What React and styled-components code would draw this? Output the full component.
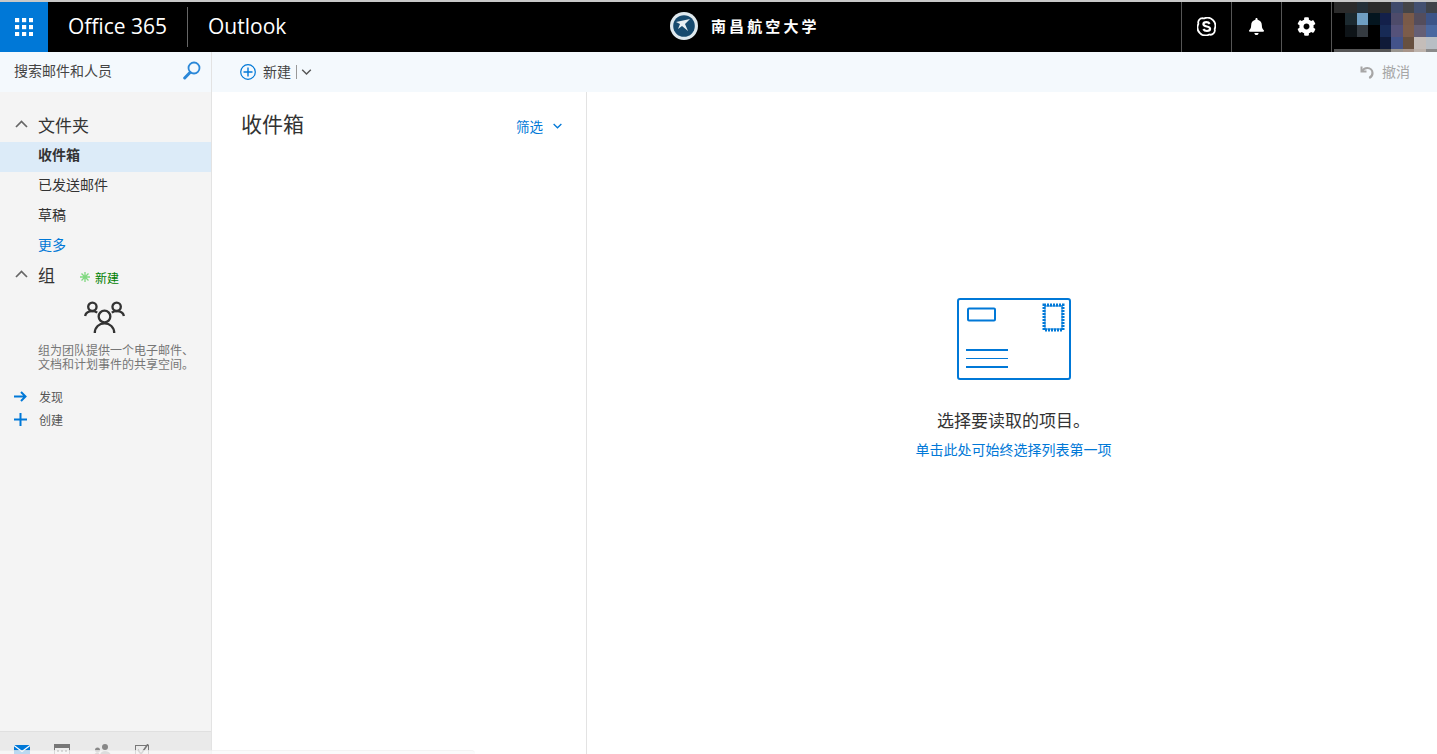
import React from "react";
import styled, { createGlobalStyle } from "styled-components";
import { FaBell, FaCog } from "react-icons/fa";

const GlobalStyle = createGlobalStyle`
  html, body, #root {
    margin: 0;
    height: 100%;
    overflow: hidden;
    background: #fff;
  }
  body {
    font-family: "Open Sans", "Noto Sans CJK SC", sans-serif;
    color: #333;
  }
`;

const CJK = `"Noto Sans CJK SC", "Noto Sans", sans-serif`;

const Page = styled.div`
  height: 754px;
  display: flex;
  flex-direction: column;
  position: relative;
  overflow: hidden;
  border-top: 2px solid #c8c8c8;
  box-sizing: border-box;
`;

const Header = styled.header`
  flex: 0 0 50px;
  display: flex;
  align-items: stretch;
  background: #000;
  color: #fff;
`;

const HeaderLeft = styled.div`
  flex: 0 0 670px;
  display: flex;
  align-items: center;
`;

const Waffle = styled.button`
  width: 48px;
  height: 50px;
  border: 0;
  padding: 0;
  background: #0078d7;
  display: grid;
  place-items: center;
`;

const Brand = styled.span`
  font-size: 21px;
  line-height: 48px;
  height: 50px;
  margin-left: 20px;
  width: 119px;
  white-space: nowrap;
`;

const BrandDivider = styled.span`
  width: 1px;
  height: 40px;
  background: #666;
`;

const AppName = styled(Brand)`
  width: auto;
`;

const School = styled.div`
  display: flex;
  align-items: center;
  gap: 13px;
  padding-bottom: 3px;
`;

const SchoolName = styled.span`
  font-family: ${CJK};
  font-size: 15px;
  font-weight: 700;
  letter-spacing: 3.1px;
  white-space: nowrap;
`;

const HeaderRight = styled.div`
  margin-left: auto;
  display: flex;
`;

const HeaderButton = styled.button`
  width: 50px;
  height: 50px;
  padding: 0 0 2px;
  border: 0;
  border-left: 1px solid #555;
  background: #000;
  color: #fff;
  display: grid;
  place-items: center;
  font-size: 17px;
`;

const Avatar = styled.div`
  width: 106px;
  height: 50px;
  border-left: 1px solid #555;
  padding-left: 2px;
  box-sizing: border-box;
  display: grid;
  grid-template-columns: repeat(9, 1fr);
  grid-template-rows: 11px 12px 12px 12px 3px;
  background: #000;
`;

const Body = styled.div`
  flex: 1;
  display: flex;
  min-height: 0;
`;

const Sidebar = styled.aside`
  flex: 0 0 212px;
  box-sizing: border-box;
  border-right: 1px solid #e3e3e3;
  display: flex;
  flex-direction: column;
  background: #f4f4f4;
`;

const SearchBox = styled.div`
  flex: 0 0 40px;
  box-sizing: border-box;
  display: flex;
  align-items: center;
  justify-content: space-between;
  padding: 0 10px 3px 14px;
  background: #f4f9fd;
  font-family: ${CJK};
  font-size: 14px;
  line-height: 20px;
  color: #444;
`;

const SearchLabel = styled.span`
  margin-top: -2px;
`;

const Nav = styled.nav`
  flex: 1;
  padding-top: 20px;
`;

const SectionHead = styled.div`
  height: 30px;
  box-sizing: border-box;
  padding: 0 0 6px 15px;
  display: flex;
  align-items: center;
  gap: 10px;
  font-family: ${CJK};
  font-size: 17px;
  color: #333;
`;

const Chevron = styled.svg`
  flex: none;
`;

const FolderRow = styled.div`
  height: 30px;
  line-height: 24px;
  padding-left: 38px;
  font-family: ${CJK};
  font-size: 14px;
  font-weight: ${(p) => (p.$active ? 700 : 400)};
  color: ${(p) => (p.$link ? "#0078d7" : "#333")};
  background: ${(p) => (p.$active ? "#dcebf8" : "transparent")};
`;

const GroupNew = styled.span`
  display: flex;
  align-items: center;
  gap: 4px;
  margin-left: 14px;
  font-size: 12px;
  color: #008000;
  position: relative;
  top: 3px;
`;

const GroupIcon = styled.div`
  display: flex;
  justify-content: center;
  margin: 9px 0 0 -3px;
`;

const GroupText = styled.p`
  margin: 9px 0 0;
  padding-left: 38px;
  font-family: ${CJK};
  font-size: 12px;
  line-height: 14px;
  color: #767676;
  white-space: nowrap;
`;

const GroupActions = styled.div`
  margin-top: 14px;
  display: flex;
  flex-direction: column;
  gap: 1px;
`;

const GroupAction = styled.div`
  height: 22.5px;
  display: flex;
  align-items: center;
  gap: 12px;
  padding-left: 14px;
  font-family: ${CJK};
  font-size: 12px;
  color: #555;
`;

const Tabs = styled.div`
  flex: 0 0 23px;
  box-sizing: border-box;
  border-top: 1px solid #e0e0e0;
  background: #eaeaea;
  display: flex;
  gap: 24px;
  padding: 12px 0 0 14px;
  overflow: hidden;
`;

const Main = styled.main`
  flex: 1;
  display: flex;
  flex-direction: column;
  min-width: 0;
`;

const CommandBar = styled.div`
  flex: 0 0 40px;
  box-sizing: border-box;
  background: #f4f9fd;
  display: flex;
  align-items: center;
  justify-content: space-between;
  padding: 0 27px 1px 28px;
  font-family: ${CJK};
  font-size: 14px;
  line-height: 20px;
  color: #444;
`;

const CommandGroup = styled.div`
  display: flex;
  align-items: center;
  gap: ${(p) => p.$gap || 7}px;
  color: ${(p) => (p.$muted ? "#a6a6a6" : "inherit")};
`;

const CommandLabel = styled.span`
  margin-top: -2px;
`;

const Sep = styled.span`
  width: 1px;
  height: 14px;
  background: #999;
  margin: 0 -3px 0 -2px;
`;

const Panes = styled.div`
  flex: 1;
  display: flex;
  min-height: 0;
`;

const ListPane = styled.section`
  flex: 0 0 375px;
  box-sizing: border-box;
  border-right: 1px solid #e3e3e3;
  padding: 15px 24px 0 29px;
  display: flex;
  justify-content: space-between;
  align-items: flex-start;
`;

const ListTitle = styled.h1`
  margin: 0;
  font-family: ${CJK};
  font-size: 21px;
  font-weight: 400;
  line-height: 32px;
  color: #333;
`;

const Filter = styled.div`
  display: flex;
  align-items: center;
  gap: 10px;
  margin-top: 10px;
  font-family: ${CJK};
  font-size: 13.5px;
  line-height: 18px;
  color: #0078d7;
`;

const ReadingPane = styled.section`
  flex: 1;
  display: flex;
  flex-direction: column;
  align-items: center;
  padding: 206px 0 0 3px;
`;

const EmptyTitle = styled.div`
  margin-top: 27px;
  font-family: ${CJK};
  font-size: 17px;
  line-height: 24px;
  color: #333;
`;

const EmptyLink = styled.a`
  margin-top: 7px;
  font-family: ${CJK};
  font-size: 14px;
  line-height: 20px;
  color: #0078d7;
`;

const BottomEdge = styled.div`
  position: absolute;
  left: 0;
  bottom: 0;
  width: 475px;
  height: 3px;
  background: rgba(250, 250, 250, 0.75);
  border-top: 1px solid rgba(0, 0, 0, 0.03);
  border-top-right-radius: 4px;
`;

const avatarCells = [
  "#2b2b2b", "#2b2b2b", "#243039", "#2a2a2a", "#2c2c2c", "#3f4a6b", "#444548", "#435070", "#3f4349",
  "#000", "#1c2a30", "#6f9fc3", "#04151f", "#13204a", "#4e4b6a", "#7a5a48", "#544d5c", "#3d5487",
  "#000", "#0e1418", "#353b41", "#000", "#172a55", "#55527a", "#7c5c4a", "#655f75", "#4a68a0",
  "#000", "#000", "#000", "#000", "#0f1a38", "#43538a", "#67503f", "#c4bdb9", "#b8bec4",
  "#555", "#555", "#555", "#555", "#555", "#99958f", "#a8958a", "#bdb3ac", "#8a8a8a",
];

const Up = () => (
  <Chevron width="13" height="8" viewBox="0 0 13 8" fill="none" stroke="#666" strokeWidth="1.7">
    <path d="M1 7l5.5-5.5L12 7" />
  </Chevron>
);

const Down = ({ color = "#555", w = 10 }) => (
  <Chevron width={w} height="6" viewBox="0 0 10 6" fill="none" stroke={color} strokeWidth="1.4">
    <path d="M.7.7L5 5l4.3-4.3" />
  </Chevron>
);

const WaffleIcon = () => (
  <svg width="18" height="18" viewBox="0 0 18 18" fill="#fff">
    {[0, 7, 14].map((y) =>
      [0, 7, 14].map((x) => <rect key={`${x}-${y}`} x={x} y={y} width="4.2" height="4.2" />)
    )}
  </svg>
);

const SchoolLogo = () => (
  <svg width="28" height="28" viewBox="0 0 28 28">
    <circle cx="14" cy="14" r="14" fill="#dfe9ee" />
    <circle cx="14" cy="14" r="10.8" fill="#174a6e" />
    <path d="M6 10l14-3-5 5 3 7-6-5-4 3 2-5z" fill="#e8eef2" />
  </svg>
);

const SkypeIcon = () => (
  <svg width="19" height="19" viewBox="0 0 19 19" fill="none" stroke="#fff">
    <path strokeWidth="1.8" d="M5.5 1.2a4.3 4.3 0 0 0-4.1 5.6 8 8 0 0 0 10.8 10.7 4.3 4.3 0 0 0 5.4-5.4A8 8 0 0 0 7 1.5a4.3 4.3 0 0 0-1.5-.3z" />
    <path strokeWidth="2.200" d="M12.7 6.8c-.8-1.2-2-1.6-3.3-1.6-1.700 0-3 .8-3 2.100 0 3 6.700 1.500 6.700 4.500 0 1.400-1.400 2.200-3.200 2.200-1.500 0-2.800-.6-3.600-1.900" />
  </svg>
);

const SearchIcon = () => (
  <svg width="18" height="19" viewBox="0 0 18 19" fill="none" stroke="#2b88d8">
    <circle cx="11" cy="7" r="5.500" strokeWidth="1.800" />
    <path d="M7 11.500L1.700 17" strokeWidth="3" strokeLinecap="round" />
  </svg>
);

const PlusCircle = () => (
  <svg width="16" height="16" viewBox="0 0 16 16" fill="none" stroke="#0078d7" strokeWidth="1.200">
    <circle cx="8" cy="8" r="7.300" />
    <path d="M8 3.500v9M3.500 8h9" strokeWidth="1.400" />
  </svg>
);

const UndoIcon = () => (
  <svg width="14" height="14" viewBox="0 0 14 14" fill="none" stroke="#a6a6a6" strokeWidth="2.200">
    <path d="M1.500 1.500v5h5" strokeWidth="2" />
    <path d="M2 6.300C3.200 4 5 3 7.300 3 10.300 3 12.500 5.200 12.500 8c0 2.200-1.200 4-3.300 5" />
  </svg>
);

const SparkIcon = () => (
  <svg width="12" height="12" viewBox="0 0 12 12" stroke="#7fd87f" strokeWidth="1.300">
    <path d="M6 1v10M1 6h10M2.500 2.500l7 7M9.500 2.500l-7 7" />
  </svg>
);

const PeopleIcon = () => (
  <svg width="41" height="33" viewBox="0 0 42 34" fill="none" stroke="#333" strokeWidth="2.400">
    <circle cx="8.500" cy="6" r="4.300" />
    <circle cx="33.500" cy="6" r="4.300" />
    <circle cx="21" cy="16" r="6" />
    <path d="M1 15.500c.6-3 3.500-5 7.500-5 2 0 3.700.5 5 1.500M41 15.500c-.6-3-3.500-5-7.500-5-2 0-3.700.5-5 1.500" />
    <path d="M11 33c0-6 4.500-10 10-10s10 4 10 10" />
  </svg>
);

const ArrowIcon = () => (
  <svg width="13" height="11" viewBox="0 0 13 11" fill="none" stroke="#0078d7" strokeWidth="2">
    <path d="M0 5.500h11M7 1l4.500 4.500L7 10" />
  </svg>
);

const PlusIcon = () => (
  <svg width="13" height="13" viewBox="0 0 13 13" stroke="#0078d7" strokeWidth="2">
    <path d="M6.500 0v13M0 6.500h13" />
  </svg>
);

const MailTab = () => (
  <svg width="16" height="12" viewBox="0 0 16 12">
    <rect y="1" width="16" height="11" fill="#0078d7" />
    <path d="M0 1.500l8 6 8-6" fill="none" stroke="#fff" strokeWidth="1.200" />
  </svg>
);

const CalendarTab = () => (
  <svg width="16" height="12" viewBox="0 0 16 12">
    <rect width="16" height="12" fill="#777" />
    <rect x="1" y="4" width="14" height="8" fill="#eee" />
    <path d="M3 6h2v2H3zM7 6h2v2H7zM11 6h2v2h-2z" fill="#777" />
  </svg>
);

const PeopleTab = () => (
  <svg width="17" height="12" viewBox="0 0 17 12" fill="#888">
    <circle cx="11" cy="3" r="3" />
    <circle cx="3.500" cy="6" r="2.500" />
    <path d="M6 12c0-3 2-5 5-5s6 2 6 5zM0 12c0-2 1.500-3.500 3.500-3.500S5 10 5 12z" />
  </svg>
);

const TaskTab = () => (
  <svg width="16" height="12" viewBox="0 0 16 12" fill="none" stroke="#777">
    <rect x=".5" y="1.500" width="13" height="14" />
    <path d="M3 6l3 4 7-10" strokeWidth="1.600" />
  </svg>
);

const LetterArt = () => (
  <svg width="114" height="83" viewBox="0 0 114 83" fill="none" stroke="#0078d7">
    <rect x="1" y="1" width="112" height="80" rx="2" strokeWidth="2" />
    <rect x="11" y="10.500" width="27" height="12" rx="1" strokeWidth="2" />
    <rect x="87" y="7" width="19" height="25" strokeWidth="3" strokeDasharray="2 1" />
    <rect x="88" y="8" width="17" height="23" strokeWidth="1" />
    <path d="M9 52h42" strokeWidth="2" />
    <path d="M9 60.500h42" strokeWidth="1.200" />
    <path d="M9 69h42" strokeWidth="2" />
  </svg>
);

export default function App() {
  return (
    <>
      <GlobalStyle />
      <Page>
        <Header>
          <HeaderLeft>
            <Waffle>
              <WaffleIcon />
            </Waffle>
            <Brand>Office 365</Brand>
            <BrandDivider />
            <AppName>Outlook</AppName>
          </HeaderLeft>
          <School>
            <SchoolLogo />
            <SchoolName>南昌航空大学</SchoolName>
          </School>
          <HeaderRight>
            <HeaderButton>
              <SkypeIcon />
            </HeaderButton>
            <HeaderButton>
              <FaBell />
            </HeaderButton>
            <HeaderButton>
              <FaCog size={19} />
            </HeaderButton>
            <Avatar>
              {avatarCells.map((c, i) => (
                <div key={i} style={{ background: c }} />
              ))}
            </Avatar>
          </HeaderRight>
        </Header>
        <Body>
          <Sidebar>
            <SearchBox>
              <SearchLabel>搜索邮件和人员</SearchLabel>
              <SearchIcon />
            </SearchBox>
            <Nav>
              <SectionHead>
                <Up />
                文件夹
              </SectionHead>
              <FolderRow $active>收件箱</FolderRow>
              <FolderRow>已发送邮件</FolderRow>
              <FolderRow>草稿</FolderRow>
              <FolderRow $link>更多</FolderRow>
              <SectionHead>
                <Up />
                组
                <GroupNew>
                  <SparkIcon />
                  新建
                </GroupNew>
              </SectionHead>
              <GroupIcon>
                <PeopleIcon />
              </GroupIcon>
              <GroupText>
                组为团队提供一个电子邮件、
                <br />
                文档和计划事件的共享空间。
              </GroupText>
              <GroupActions>
                <GroupAction>
                  <ArrowIcon />
                  发现
                </GroupAction>
                <GroupAction>
                  <PlusIcon />
                  创建
                </GroupAction>
              </GroupActions>
            </Nav>
            <Tabs>
              <MailTab />
              <CalendarTab />
              <PeopleTab />
              <TaskTab />
            </Tabs>
          </Sidebar>
          <Main>
            <CommandBar>
              <CommandGroup>
                <PlusCircle />
                <CommandLabel>新建</CommandLabel>
                <Sep />
                <Down w={11} />
              </CommandGroup>
              <CommandGroup $muted $gap={8}>
                <UndoIcon />
                <CommandLabel>撤消</CommandLabel>
              </CommandGroup>
            </CommandBar>
            <Panes>
              <ListPane>
                <ListTitle>收件箱</ListTitle>
                <Filter>
                  <span>筛选</span>
                  <Down color="#0078d7" w={9} />
                </Filter>
              </ListPane>
              <ReadingPane>
                <LetterArt />
                <EmptyTitle>选择要读取的项目。</EmptyTitle>
                <EmptyLink>单击此处可始终选择列表第一项</EmptyLink>
              </ReadingPane>
            </Panes>
          </Main>
        </Body>
        <BottomEdge />
      </Page>
    </>
  );
}
